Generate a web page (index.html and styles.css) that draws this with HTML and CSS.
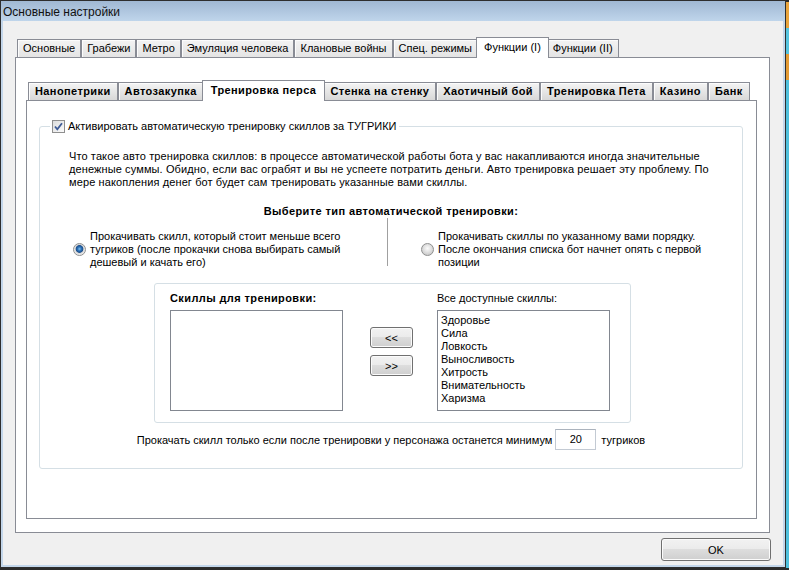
FILE: index.html
```html
<!DOCTYPE html>
<html lang="ru">
<head>
    <meta charset="UTF-8">
    <title>Основные настройки</title>
    <link rel="stylesheet" href="styles.css">
</head>
<body>
    <div class="window">
        <div class="titlebar">Основные настройки</div>

        <div class="client">
            <div class="tabs">
                <div class="tab-strip">
                    <span class="tab">Основные</span>
                    <span class="tab">Грабежи</span>
                    <span class="tab">Метро</span>
                    <span class="tab">Эмуляция человека</span>
                    <span class="tab">Клановые войны</span>
                    <span class="tab">Спец. режимы</span>
                    <span class="tab active">Функции (I)</span>
                    <span class="tab">Функции (II)</span>
                </div>

                <div class="tab-panel outer-panel">
                    <div class="tabs inner-tabs">
                        <div class="tab-strip">
                            <span class="tab">Нанопетрики</span>
                            <span class="tab">Автозакупка</span>
                            <span class="tab active">Тренировка перса</span>
                            <span class="tab">Стенка на стенку</span>
                            <span class="tab">Хаотичный бой</span>
                            <span class="tab">Тренировка Пета</span>
                            <span class="tab">Казино</span>
                            <span class="tab">Банк</span>
                        </div>

                        <div class="tab-panel inner-panel">
                            <fieldset class="group">
                                <legend>
                                    <span class="checkbox">
                                        <svg viewBox="0 0 11 11" width="11" height="11">
                                            <path d="M2 5.5 L4.3 8.3 L9 2.2" fill="none" stroke="#3f5b96" stroke-width="1.8"/>
                                        </svg>
                                    </span>
                                    Активировать автоматическую тренировку скиллов за ТУГРИКИ
                                </legend>

                                <p class="desc">Что такое авто тренировка скиллов: в процессе автоматической работы бота у вас накапливаются иногда значительные<br>денежные суммы. Обидно, если вас ограбят и вы не успеете потратить деньги. Авто тренировка решает эту проблему. По<br>мере накопления денег бот будет сам тренировать указанные вами скиллы.</p>

                                <div class="choose-title bold">Выберите тип автоматической тренировки:</div>

                                <div class="modes">
                                    <div class="mode mode-left">
                                        <span class="radio checked"></span>
                                        <span>Прокачивать скилл, который стоит меньше всего<br>тугриков (после прокачки снова выбирать самый<br>дешевый и качать его)</span>
                                    </div>
                                    <div class="divider"></div>
                                    <div class="mode mode-right">
                                        <span class="radio"></span>
                                        <span>Прокачивать скиллы по указанному вами порядку.<br>После окончания списка бот начнет опять с первой<br>позиции</span>
                                    </div>
                                </div>

                                <div class="skills-box">
                                    <div class="skills-col">
                                        <div class="col-title bold">Скиллы для тренировки:</div>
                                        <div class="listbox"></div>
                                    </div>
                                    <div class="move-btns">
                                        <button class="btn move-btn">&lt;&lt;</button>
                                        <button class="btn move-btn">&gt;&gt;</button>
                                    </div>
                                    <div class="skills-col">
                                        <div class="col-title">Все доступные скиллы:</div>
                                        <div class="listbox">
                                            <div>Здоровье</div>
                                            <div>Сила</div>
                                            <div>Ловкость</div>
                                            <div>Выносливость</div>
                                            <div>Хитрость</div>
                                            <div>Внимательность</div>
                                            <div>Харизма</div>
                                        </div>
                                    </div>
                                </div>

                                <div class="min-row">
                                    <span>Прокачать скилл только если после тренировки у персонажа останется минимум</span>
                                    <span class="num-input">20</span>
                                    <span>тугриков</span>
                                </div>
                            </fieldset>
                        </div>
                    </div>
                </div>
            </div>

            <div class="footer">
                <button class="btn ok-btn">OK</button>
            </div>
        </div>
    </div>
</body>
</html>
```

FILE: styles.css
```css
body {
    margin: 0;
    background: linear-gradient(to bottom, #2b2b2b 0, #2b2b2b 2px, #e9a43c 2px, #e9a43c 28px, #55c4df 28px, #55c4df 54px, #e39b35 54px, #e39b35 80px, #4fc0dc 80px);
    font-family: "Liberation Sans", Arial, sans-serif;
    font-size: 11px;
    color: #000;
}
.window {
    width: 786px;
    height: 568px;
    box-sizing: border-box;
    border: 1px solid #2e2e2e;
    background: #c3d6ea;
    padding: 0 2px 2px;
    display: flex;
    flex-direction: column;
}
.titlebar {
    flex: none;
    height: 20px;
    margin: 0 -2px;
    padding-left: 2px;
    line-height: 22px;
    font-size: 12px;
    color: #111;
    background: linear-gradient(to bottom, #a0b8d3, #bfd5eb);
}
.client {
    flex: 1;
    background: #f0f0f0;
    padding: 16px 0 0 12px;
    display: flex;
    flex-direction: column;
}
.tabs {
    flex: none;
}

/* tabs */
.tab-strip {
    display: flex;
    align-items: flex-end;
    height: 20px;
    padding-left: 2px;
}
.tab {
    height: 17px;
    line-height: 17px;
    padding: 0 5px;
    border: 1px solid #898c95;
    border-bottom: none;
    background: linear-gradient(to bottom, #f3f3f3, #e4e4e4);
    box-shadow: inset 1px 1px 0 #fcfcfc;
    white-space: nowrap;
}
.tab.active {
    position: relative;
    z-index: 1;
    height: 20px;
    line-height: 18px;
    margin: 0 -2px -1px;
    padding: 0 7px;
    background: #fff;
    box-shadow: none;
}
.tab-panel {
    border: 1px solid #898c95;
    background: #fff;
    box-sizing: border-box;
}
.outer-panel {
    width: 755px;
    height: 476px;
    padding: 22px 10px 0 10px;
}
.inner-tabs .tab {
    font-weight: bold;
    letter-spacing: 0.4px;
    padding: 0 6px;
    background: linear-gradient(to bottom, #f4f4f4, #d8d8d8);
}
.inner-tabs .tab.active {
    padding: 0 8px;
    background: #fff;
}
.inner-panel {
    width: 731px;
    height: 419px;
}

/* main group */
.group {
    margin: 18px 0 0 12px;
    width: 704px;
    box-sizing: border-box;
    border: 1px solid #d5dfe5;
    border-radius: 3px;
    padding: 0 0 18px 0;
    min-width: 0;
}
.group legend {
    margin-left: 10px;
    padding: 0 2px;
    height: 14px;
    line-height: 14px;
    display: flex;
    align-items: center;
    gap: 3px;
}
.checkbox {
    width: 13px;
    height: 13px;
    box-sizing: border-box;
    border: 1px solid #8f8f8f;
    background: linear-gradient(to bottom right, #dcdcdc, #fbfbfb);
    display: flex;
    align-items: center;
    justify-content: center;
}
.desc {
    margin: 17px 0 0 29px;
    line-height: 13px;
    letter-spacing: 0.11px;
    white-space: nowrap;
}
.bold {
    font-weight: bold;
    letter-spacing: 0.4px;
}
.choose-title {
    margin-top: 15px;
    line-height: 14px;
    text-align: center;
}
.modes {
    display: flex;
}
.mode {
    display: flex;
    align-items: center;
    gap: 4px;
    padding-top: 12px;
    line-height: 13px;
    white-space: nowrap;
}
.mode-left {
    margin-left: 33px;
    width: 314px;
    box-sizing: border-box;
}
.mode-right {
    padding-left: 33px;
}
.divider {
    width: 1px;
    background: #a0a0a0;
    margin-bottom: 3px;
}
.radio {
    flex: none;
    width: 13px;
    height: 13px;
    box-sizing: border-box;
    border-radius: 50%;
    border: 1px solid #8e8f8f;
    background: radial-gradient(circle at 50% 40%, #fbfbfb 0, #e6e6e6 3px, #cfcfcf 6px);
}
.radio.checked {
    background: radial-gradient(circle at 50% 45%, #7ec0f0 0, #2a6fb5 2px, #1d4f8c 3.5px, #d6d6d6 4.2px, #f2f2f2 6px);
}

/* skills lists */
.skills-box {
    margin: 14px 0 0 114px;
    width: 477px;
    box-sizing: border-box;
    border: 1px solid #d5dfe5;
    border-radius: 3px;
    padding: 8px 19px 11px 15px;
    display: flex;
}
.col-title {
    line-height: 13px;
    margin-bottom: 5px;
}
.listbox {
    width: 173px;
    height: 101px;
    box-sizing: border-box;
    border: 1px solid #828790;
    background: #fff;
    padding: 3px 3px;
    line-height: 13px;
}
.move-btns {
    display: flex;
    flex-direction: column;
    gap: 7px;
    margin: 35px 24px 0 27px;
}
.btn {
    font: inherit;
    color: #000;
    border: 1px solid #707070;
    border-radius: 3px;
    background: linear-gradient(to bottom, #f2f2f2 0, #ebebeb 50%, #dddddd 50%, #cfcfcf 100%);
    box-shadow: inset 0 0 0 1px #fbfbfb;
    padding: 0;
    cursor: pointer;
}
.move-btn {
    width: 43px;
    height: 21px;
}

.min-row {
    margin-top: 6px;
    display: flex;
    justify-content: center;
    align-items: center;
}
.num-input {
    width: 41px;
    height: 21px;
    box-sizing: border-box;
    margin: 0 5px 0 3px;
    border: 1px solid #c3cad3;
    border-top-color: #abb3bd;
    text-align: center;
    line-height: 19px;
    background: #fff;
}

.footer {
    flex: none;
    display: flex;
    justify-content: flex-end;
    padding: 5px 12px 0 0;
}
.ok-btn {
    width: 110px;
    height: 23px;
}
```
